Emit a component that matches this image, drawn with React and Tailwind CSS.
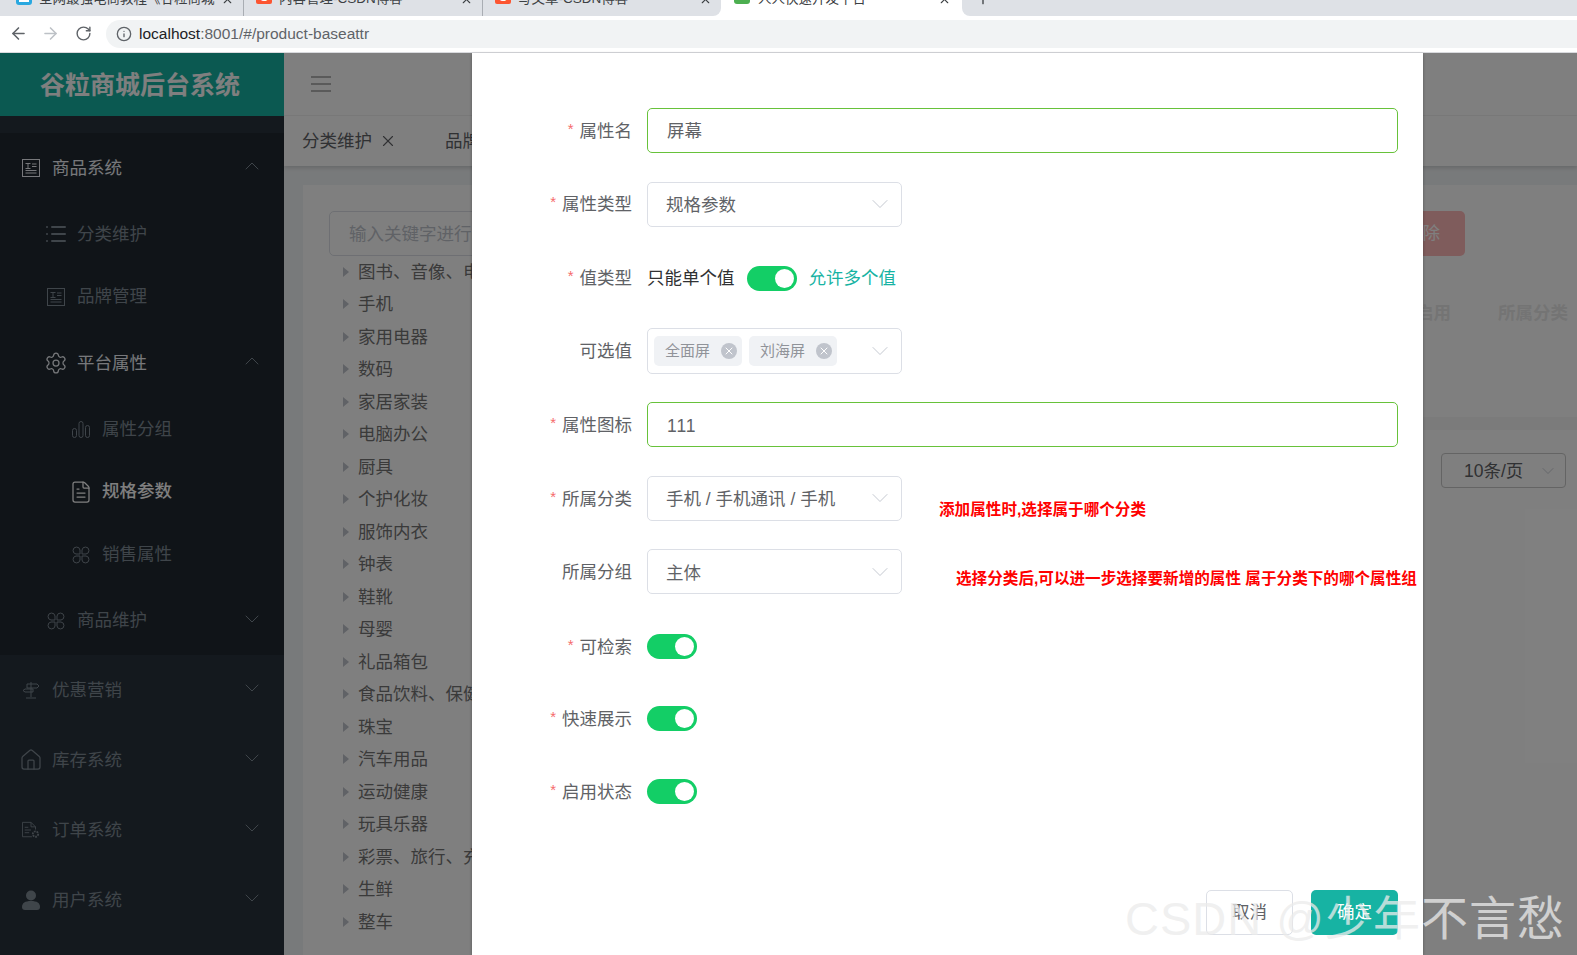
import React from "react";
import { ArrowLeft, ArrowRight, RotateCw, Info, X, ChevronDown, ChevronUp, List, Settings, FileText, Home, Plus } from "lucide-react";

const FONT = "font-['Liberation_Sans','Noto_Sans_CJK_SC',sans-serif]";

const tabs = [
  { title: "全网最强电商教程《谷粒商城》对标阿里", icon: "blue", cls: "w-[244px] pl-[16px] border-r" },
  { title: "内容管理-CSDN博客", icon: "c", cls: "w-[239px] pl-[12px] border-r" },
  { title: "写文章-CSDN博客", icon: "c", cls: "w-[238px] pl-[12px]" },
];

const treeItems = [
  "图书、音像、电子书刊", "手机", "家用电器", "数码", "家居家装", "电脑办公", "厨具", "个护化妆", "服饰内衣", "钟表", "鞋靴",
  "母婴", "礼品箱包", "食品饮料、保健食品", "珠宝", "汽车用品", "运动健康", "玩具乐器", "彩票、旅行、充值、票务", "生鲜", "整车",
];

const NewsIcon = () => (
  <svg width="18" height="18" viewBox="0 0 18 18" fill="none" stroke="currentColor">
    <rect x="0.5" y="0.5" width="17" height="17" />
    <path d="M3.5 4.5h5M6 4.5v5M3.5 9.5h5M10 5h4.5M10 7.5h4.5M3.5 11.5h11M3.5 14h11" />
  </svg>
);

const BarsIcon = () => (
  <svg width="18" height="18" viewBox="0 0 18 18" fill="none" stroke="currentColor">
    <rect x="0.5" y="8.5" width="4" height="9" rx="2" />
    <rect x="7" y="1.5" width="4" height="16" rx="2" />
    <rect x="13.5" y="5.5" width="4" height="12" rx="2" />
  </svg>
);

const GridIcon = () => (
  <svg width="18" height="18" viewBox="0 0 18 18" fill="none" stroke="currentColor">
    <path d="M8 8H4a3.5 3.5 0 1 1 4-4zM10 8h4a3.5 3.5 0 1 0-4-4zM8 10H4a3.5 3.5 0 1 0 4 4zM10 10h4a3.5 3.5 0 1 1-4 4z" />
  </svg>
);

const SignIcon = () => (
  <svg width="18" height="18" viewBox="0 0 18 18" fill="none" stroke="currentColor">
    <path d="M9 1v15M4 17h10M5 3h10l2 2-2 2H5zM3 8h8v3H3l-2-1.500z" />
  </svg>
);

const OrderIcon = () => (
  <svg width="20" height="18" viewBox="0 0 20 18" fill="none" stroke="currentColor">
    <path d="M11 16.500H0.500V0.500H10l5 5v3M10 0.500v5h5M3 6h4M3 9h7M3 12h5" />
    <circle cx="15" cy="13.500" r="3" strokeWidth="2" strokeDasharray="2 1" />
  </svg>
);

const UserIcon = () => (
  <svg width="18" height="20" viewBox="0 0 18 20" fill="currentColor">
    <circle cx="9" cy="5.500" r="5" />
    <path d="M0 17c0-4 3-6 9-6s9 2 9 6c0 2-1 3-3 3H3c-2 0-3-1-3-3z" />
  </svg>
);

const MenuRow = ({ icon, label, level = 0, arrow, h, textColor = "text-[#7f8a94]", iconColor = "text-[#7f8a94]" }) => (
  <div
    className={`flex items-center pr-[20px] ${h} ${level === 0 ? "pl-[22px]" : level === 1 ? "pl-[47px]" : "pl-[72px]"}`}
  >
    <span className={`flex w-[18px] shrink-0 justify-center ${iconColor}`}>{icon}</span>
    <span className={`ml-[12px] text-[17.5px] ${textColor}`}>{label}</span>
    {arrow === "up" && <ChevronUp size={24} strokeWidth={1} className="ml-auto -translate-y-[2px] text-[#7f8a94]" />}
    {arrow === "down" && <ChevronDown size={24} strokeWidth={1} className="ml-auto -translate-y-[2px] text-[#7f8a94]" />}
  </div>
);

const Sidebar = () => (
  <aside className="flex h-full w-[284px] shrink-0 flex-col bg-[#28323c]">
    <div className="flex h-[63px] shrink-0 items-center justify-center bg-[#17b3a3] pr-[4px] pt-[2px] text-[25px] font-bold text-white">
      谷粒商城后台系统
    </div>
    <div className="h-[17px] shrink-0" />
    <div className="bg-[#202830]">
      <MenuRow icon={<NewsIcon />} label="商品系统" arrow="up" h="h-[70px]" textColor="text-[#eef1f6]" iconColor="text-[#eef1f6]" />
      <MenuRow icon={<List size={24} strokeWidth={2} className="shrink-0" />} label="分类维护" level={1} h="h-[62px]" />
      <MenuRow icon={<NewsIcon />} label="品牌管理" level={1} h="h-[63px]" />
      <MenuRow icon={<Settings size={24} strokeWidth={1.25} className="shrink-0" />} label="平台属性" level={1} arrow="up" h="h-[70px]" textColor="text-[#eef1f6]" iconColor="text-[#eef1f6]" />
      <MenuRow icon={<BarsIcon />} label="属性分组" level={2} h="h-[62px]" />
      <MenuRow icon={<FileText size={24} strokeWidth={1.25} className="shrink-0" />} label="规格参数" level={2} h="h-[63px]" textColor="text-white font-medium" iconColor="text-white" />
      <MenuRow icon={<GridIcon />} label="销售属性" level={2} h="h-[63px]" />
      <MenuRow icon={<GridIcon />} label="商品维护" level={1} arrow="down" h="h-[69px]" />
    </div>
    <MenuRow icon={<SignIcon />} label="优惠营销" arrow="down" h="h-[70px]" />
    <MenuRow icon={<Home size={24} strokeWidth={1.25} className="shrink-0" />} label="库存系统" arrow="down" h="h-[70px]" />
    <MenuRow icon={<OrderIcon />} label="订单系统" arrow="down" h="h-[70px]" />
    <MenuRow icon={<UserIcon />} label="用户系统" arrow="down" h="h-[70px]" />
  </aside>
);

const PageBehind = () => (
  <div className="flex h-full min-w-0 flex-1 flex-col bg-[#f1f4f6]">
    <div className="flex h-[63px] shrink-0 items-center border-b border-[#f4f4f4] bg-white pl-[27px]">
      <div className="flex w-[20px] flex-col gap-[5px]">
        <span className="h-[2px] bg-[#b4b4b4]" />
        <span className="h-[2px] bg-[#b4b4b4]" />
        <span className="h-[2px] bg-[#b4b4b4]" />
      </div>
    </div>
    <div className="flex h-[50px] shrink-0 items-center bg-white pl-[18px] text-[17.5px] text-[#606266] shadow-[0_2px_4px_rgba(0,0,0,0.15)]">
      <span>分类维护</span>
      <X size={18} strokeWidth={1.5} className="ml-[7px]" />
      <span className="ml-[48px]">品牌管理</span>
    </div>
    <div className="flex min-h-0 flex-1 pl-[19px] pt-[19px]">
      <div className="w-[420px] shrink-0 bg-white pl-[26px] pt-[26px] text-[17.5px] text-[#757575]">
        <div className="flex h-[45px] w-[300px] items-center rounded-[5px] border border-[#dcdfe6] pl-[19px] pt-[2px] text-[#c0c4cc]">
          输入关键字进行过滤
        </div>
        <div className="-mt-[0.500px]">
          {treeItems.map((item) => (
            <div key={item} className="flex h-[32.5px] items-center whitespace-nowrap pl-[14px]">
              <span className="h-0 w-0 border-y-[5px] border-l-[6px] border-y-transparent border-l-[#c0c4cc]" />
              <span className="ml-[9px]">{item}</span>
            </div>
          ))}
        </div>
      </div>
      <div className="flex min-w-0 flex-1 flex-col bg-white">
        <div className="h-[232px] shrink-0 pt-[26px]">
          <div className="flex justify-end pr-[112px]">
            <div className="flex h-[45px] w-[85px] items-center justify-center rounded-[5px] bg-[#ffb8b8] text-[17.5px] text-white">
              删除
            </div>
          </div>
          <div className="mt-[44px] flex justify-end gap-[47px] pr-[9px] text-[17.5px] font-bold text-[#e8e8e8]">
            <span>启用</span>
            <span>所属分类</span>
          </div>
        </div>
        <div className="h-[13px] shrink-0 bg-[#f6f6f6]" />
        <div className="flex justify-end pr-[11px] pt-[23px]">
          <div className="flex h-[35px] w-[125px] items-center rounded-[4px] border border-[#c8c8c8] pl-[22px] pt-[1px] text-[17.5px] text-[#606266]">
            10条/页
            <ChevronDown size={20} strokeWidth={1} className="ml-auto mr-[7px] text-[#c0c4cc]" />
          </div>
        </div>
      </div>
    </div>
  </div>
);

const Label = ({ required, children }) => (
  <div className="flex h-[45px] w-[175px] shrink-0 items-center justify-end pr-[15px] pt-[1px] text-[17.5px] text-[#606266]">
    {required && <span className="mr-[6px] -translate-y-[2px] text-[15px] text-[#f56c6c]">*</span>}
    {children}
  </div>
);

const Field = ({ label, required, children, className = "" }) => (
  <div className={`flex ${className}`}>
    <Label required={required}>{label}</Label>
    {children}
  </div>
);

const TextBox = ({ value, className = "" }) => (
  <div className={`flex h-[45px] flex-1 items-center rounded-[5px] border border-[#67c23a] pl-[19px] pt-[2px] text-[17.5px] text-[#606266] ${className}`}>
    {value}
  </div>
);

const SelectBox = ({ value }) => (
  <div className="flex h-[45px] w-[255px] shrink-0 items-center rounded-[5px] border border-[#dcdfe6] pl-[18px] pr-[7px] pt-[2px] text-[17.5px] text-[#606266]">
    {value}
    <ChevronDown size={28} strokeWidth={0.8} className="ml-auto -translate-y-[1px] text-[#c0c4cc]" />
  </div>
);

const Switch = () => (
  <div className="flex h-[25px] w-[50px] shrink-0 items-center justify-end rounded-full bg-[#13ce66] pr-[3px]">
    <span className="h-[19px] w-[19px] rounded-full bg-white" />
  </div>
);

const Tag = ({ label }) => (
  <div className="flex h-[30px] w-[88px] items-center rounded-[5px] bg-[#f0f2f5] pl-[11px] text-[15px] text-[#909399]">
    {label}
    <span className="ml-[11px] flex h-[16px] w-[16px] items-center justify-center rounded-full bg-[#c0c4cc] text-white">
      <X size={12} strokeWidth={2} />
    </span>
  </div>
);

const switchRows = [
  { label: "可检索", cls: "mt-[1px]" },
  { label: "快速展示", cls: "-mt-[1.500px]" },
  { label: "启用状态", cls: "" },
];

const Modal = () => (
  <div className="absolute bottom-0 left-[472px] top-0 flex w-[951px] flex-col justify-between bg-white shadow-[0_1px_3px_rgba(0,0,0,0.3)]">
    <div className="flex flex-col gap-[28.500px] pr-[25px] pt-[55px]">
      <Field label="属性名" required>
        <TextBox value="屏幕" />
      </Field>
      <Field label="属性类型" required>
        <SelectBox value="规格参数" />
      </Field>
      <Field label="值类型" required>
        <div className="flex h-[45px] items-center pt-[1px] text-[17.5px]">
          <span className="text-[#303133]">只能单个值</span>
          <span className="ml-[12px]"><Switch /></span>
          <span className="ml-[12px] text-[#17b3a3]">允许多个值</span>
        </div>
      </Field>
      <Field label="可选值" className="-mt-[0.600px]">
        <div className="flex h-[46px] w-[255px] items-center gap-[7px] rounded-[5px] border border-[#dcdfe6] pl-[6px] pr-[7px]">
          <Tag label="全面屏" />
          <Tag label="刘海屏" />
          <ChevronDown size={28} strokeWidth={0.8} className="ml-auto text-[#c0c4cc]" />
        </div>
      </Field>
      <Field label="属性图标" required>
        <TextBox value="111" className="tracking-[1px]" />
      </Field>
      <Field label="所属分类" required>
        <SelectBox value="手机 / 手机通讯 / 手机" />
        <span className="ml-[37px] mt-[23px] text-[15.600px] font-bold leading-[22px] text-[#ff0000]">添加属性时,选择属于哪个分类</span>
      </Field>
      <Field label="所属分组">
        <SelectBox value="主体" />
        <span className="ml-[54px] mt-[19px] whitespace-nowrap text-[15.600px] font-bold leading-[22px] text-[#ff0000]">
          选择分类后,可以进一步选择要新增的属性 属于分类下的哪个属性组
        </span>
      </Field>
      {switchRows.map((row) => (
        <Field key={row.label} label={row.label} required className={row.cls}>
          <div className="flex h-[45px] items-center">
            <Switch />
          </div>
        </Field>
      ))}
    </div>
    <div className="flex justify-end gap-[18px] pb-[20px] pr-[25px] text-[17.5px]">
      <div className="flex h-[45px] w-[87px] items-center justify-center rounded-[5px] border border-[#dcdfe6] text-[#606266]">取消</div>
      <div className="flex h-[45px] w-[87px] items-center justify-center rounded-[5px] bg-[#17b3a3] text-white">确定</div>
    </div>
  </div>
);

const Favicon = ({ type }) => {
  if (type === "blue") return <span className="h-[16px] w-[16px] shrink-0 -translate-y-[2px] rounded-[3px] border-[3px] border-[#29a8e0] bg-white" />;
  if (type === "c")
    return (
      <span className="flex h-[16px] w-[16px] shrink-0 -translate-y-[3px] items-center justify-center rounded-[2px] bg-[#fc5531] text-[13px] font-bold leading-none text-white">
        C
      </span>
    );
  return <span className="h-[16px] w-[16px] shrink-0 -translate-y-[3px] rounded-[3px] bg-[#4caf50]" />;
};

const BrowserChrome = () => (
  <div className="shrink-0 bg-white">
    <div className="flex h-[16px] items-end overflow-hidden text-[13.5px] text-[#3c4043]">
      <div className="flex h-[16px] shrink-0 items-end overflow-hidden rounded-br-[8px] bg-[#dee1e6]">
        {tabs.map((tab) => (
          <div key={tab.title} className={`flex h-[34px] shrink-0 items-center border-[#a9adb3] pr-[9px] ${tab.cls}`}>
            <Favicon type={tab.icon} />
            <span className="ml-[7px] min-w-0 flex-1 overflow-hidden whitespace-nowrap">{tab.title}</span>
            <X size={13} strokeWidth={2} className="ml-[6px] shrink-0" />
          </div>
        ))}
      </div>
      <div className="flex h-[34px] w-[241px] shrink-0 items-center bg-white pl-[13px] pr-[11px]">
        <Favicon type="green" />
        <span className="ml-[8px] flex-1 whitespace-nowrap">人人快速开发平台</span>
        <X size={13} strokeWidth={2} />
      </div>
      <div className="flex h-[16px] flex-1 items-end overflow-hidden rounded-bl-[8px] bg-[#dee1e6]">
        <div className="flex h-[34px] items-center pl-[13px]">
          <Plus size={16} strokeWidth={2} />
        </div>
      </div>
    </div>
    <div className="flex h-[37px] items-center border-b border-[#d9dade] pb-[1px] pl-[9px]">
      <ArrowLeft size={19} strokeWidth={2} className="text-[#5f6368]" />
      <ArrowRight size={19} strokeWidth={2} className="ml-[13px] text-[#bdc1c6]" />
      <RotateCw size={17} strokeWidth={2} className="ml-[15px] text-[#5f6368]" />
      <div className="ml-[14px] flex h-[28px] flex-1 items-center rounded-l-full bg-[#f1f3f4] pl-[10px] text-[15.500px]">
        <Info size={16} strokeWidth={2} className="text-[#5f6368]" />
        <span className="ml-[7px] text-[#202124]">localhost</span>
        <span className="text-[#5f6368]">:8001/#/product-baseattr</span>
      </div>
    </div>
  </div>
);

export default function App() {
  return (
    <div className={`flex h-[955px] w-[1577px] flex-col overflow-hidden bg-white ${FONT}`}>
      <BrowserChrome />
      <div className="relative flex min-h-0 flex-1">
        <Sidebar />
        <PageBehind />
        <div className="absolute inset-0 bg-black/50" />
        <Modal />
      </div>
      <div className="pointer-events-none absolute left-[1125px] top-[888px] whitespace-nowrap text-[47px] leading-[62px] tracking-[1px] text-[#ebebeb]/75">
        CSDN @少年不言愁
      </div>
    </div>
  );
}
